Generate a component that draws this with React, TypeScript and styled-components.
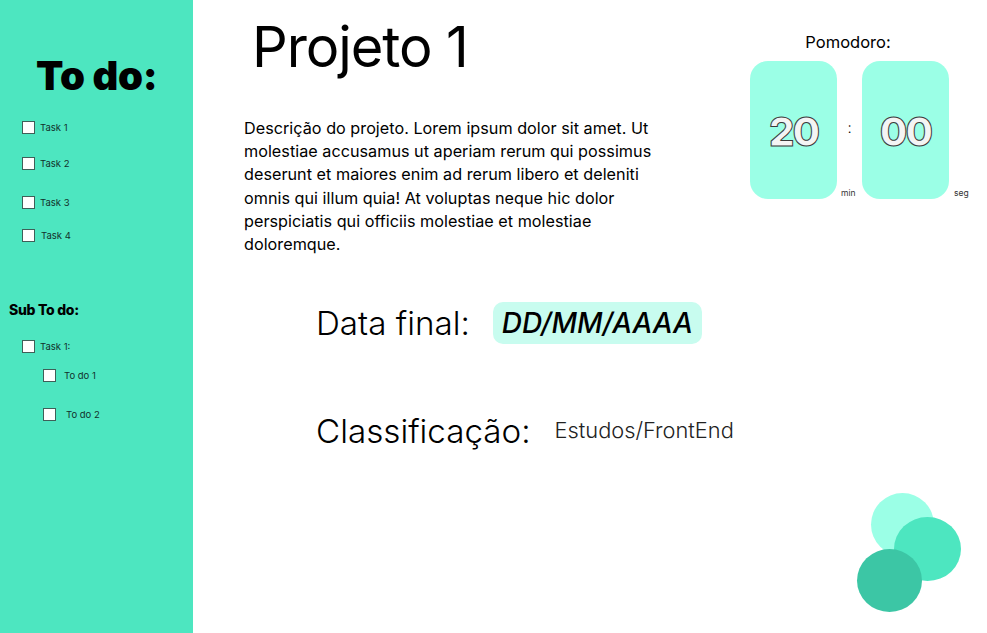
import React from "react";
import styled, { createGlobalStyle } from "styled-components";

const Global = createGlobalStyle`
  html, body { margin: 0; padding: 0; background: #fff; }
  body { font-family: Inter, "Liberation Sans", sans-serif; color: #000; }
`;
const Page = styled.div`
  position: relative;
  display: flex;
  width: 987px;
  height: 633px;
  overflow: hidden;
  background: #fff;
`;
const Sidebar = styled.aside`
  display: flex;
  flex-direction: column;
  width: 193px;
  flex: none;
  background: #4de6c0;
  padding-top: 54px;
  box-sizing: border-box;
`;
const SideTitle = styled.h2`
  margin: 0 0 32px 36px;
  font-size: 40px;
  line-height: 44px;
  font-weight: 900;
  letter-spacing: -0.3px;
  white-space: nowrap;
`;
const TaskRow = styled.label<{ $top: number; $left?: number; $gap?: number }>`
  display: flex;
  align-items: center;
  height: 14px;
  margin-top: ${(p) => p.$top}px;
  margin-left: ${(p) => p.$left ?? 22}px;
  gap: ${(p) => p.$gap ?? 5}px;
  font-size: 9.5px;
  color: #12312b;
  white-space: nowrap;
`;
const Box = styled.span`
  width: 13px;
  height: 13px;
  flex: none;
  box-sizing: border-box;
  background: #fff;
  border: 1px solid #3f5f58;
`;
const SubTitle = styled.h3`
  margin: 58px 0 0 9px;
  font-size: 14px;
  line-height: 20px;
  font-weight: 800;
  letter-spacing: -0.3px;
`;
const Main = styled.main`
  flex: 1;
  display: flex;
  flex-direction: column;
  min-width: 0;
`;
const TopRow = styled.div`
  display: flex;
  justify-content: space-between;
  align-items: flex-start;
`;
const Intro = styled.div`
  display: flex;
  flex-direction: column;
`;
const Title = styled.h1`
  margin: 10px 0 0 59px;
  font-size: 56px;
  line-height: 74px;
  font-weight: 400;
  letter-spacing: -1.1px;
  white-space: nowrap;
`;
const Description = styled.p`
  margin: 33px 0 0 51px;
  width: 430px;
  font-size: 16.2px;
  line-height: 23.2px;
  font-weight: 400;
  letter-spacing: 0.02px;
`;
const Pomodoro = styled.section`
  display: grid;
  grid-template-columns: 87px 25px 87px 19px;
  grid-template-rows: auto 138px;
  margin: 32px 19px 0 0;
  width: 218px;
`;
const PomodoroLabel = styled.div`
  grid-column: 1 / -1;
  text-align: center;
  font-size: 16.5px;
  line-height: 20px;
  margin: 0 22px 9px 0;
`;
const Card = styled.div`
  display: flex;
  flex: 1;
  align-items: center;
  justify-content: center;
  background: #9bffe6;
  border-radius: 18px;
  padding-top: 2px;
  box-sizing: border-box;
  font-size: 40px;
  font-weight: 800;
  color: #f4f4f4;
  -webkit-text-stroke: 1px #3a3a3a;
  letter-spacing: -2px;
`;
const Colon = styled.div`
  display: flex;
  align-items: center;
  justify-content: center;
  padding-bottom: 6px;
  font-size: 15px;
  font-weight: 300;
`;
const CardCell = styled.div`
  display: flex;
  position: relative;
`;
const CardUnit = styled.span<{ $gap: number }>`
  position: absolute;
  left: 100%;
  bottom: 0;
  margin: 0 0 1px ${(p) => p.$gap}px;
  font-size: 8.5px;
  line-height: 10px;
  color: #333;
`;
const Field = styled.div<{ $top: number }>`
  display: flex;
  align-items: center;
  margin: ${(p) => p.$top}px 0 0 123px;
  white-space: nowrap;
`;
const FieldLabel = styled.span`
  font-size: 33.2px;
  line-height: 42px;
  font-weight: 300;
`;
const DateBadge = styled.span`
  display: flex;
  align-items: center;
  justify-content: center;
  margin-left: 23px;
  width: 209px;
  height: 42px;
  border-radius: 10px;
  background: #c8fcef;
  font-size: 28px;
  font-weight: 500;
  font-style: italic;
`;
const FieldValue = styled.span`
  margin-left: 24px;
  font-size: 21.8px;
  font-weight: 300;
  color: #222;
  padding-bottom: 2px;
`;
const Dot = styled.div<{ $x: number; $y: number; $w: number; $h: number; $c: string }>`
  position: absolute;
  left: ${(p) => p.$x}px;
  top: ${(p) => p.$y}px;
  width: ${(p) => p.$w}px;
  height: ${(p) => p.$h}px;
  border-radius: 50%;
  background: ${(p) => p.$c};
`;

const Task = ({ label, top, left, gap }: { label: string; top: number; left?: number; gap?: number }) => (
  <TaskRow $top={top} $left={left} $gap={gap}>
    <Box />
    {label}
  </TaskRow>
);

export default function App() {
  return (
    <Page>
      <Global />
      <Sidebar>
        <SideTitle>To do:</SideTitle>
        <Task label="Task 1" top={-10} />
        <Task label="Task 2" top={22} />
        <Task label="Task 3" top={25} />
        <Task label="Task 4" top={19} gap={6} />
        <SubTitle>Sub To do:</SubTitle>
        <Task label="Task 1:" top={19} />
        <Task label="To do 1" top={15} left={43} gap={8} />
        <Task label="To do 2" top={25} left={43} gap={10} />
      </Sidebar>
      <Main>
        <TopRow>
          <Intro>
            <Title>Projeto 1</Title>
            <Description>
              Descrição do projeto. Lorem ipsum dolor sit amet. Ut molestiae accusamus ut aperiam rerum qui possimus
              deserunt et maiores enim ad rerum libero et deleniti omnis qui illum quia! At voluptas neque hic dolor
              perspiciatis qui officiis molestiae et molestiae doloremque.
            </Description>
          </Intro>
          <Pomodoro>
            <PomodoroLabel>Pomodoro:</PomodoroLabel>
            <CardCell>
              <Card>20</Card>
              <CardUnit $gap={4}>min</CardUnit>
            </CardCell>
            <Colon>:</Colon>
            <CardCell>
              <Card>00</Card>
              <CardUnit $gap={5}>seg</CardUnit>
            </CardCell>
          </Pomodoro>
        </TopRow>
        <Field $top={46}>
          <FieldLabel>Data final:</FieldLabel>
          <DateBadge>DD/MM/AAAA</DateBadge>
        </Field>
        <Field $top={66}>
          <FieldLabel>Classificação:</FieldLabel>
          <FieldValue>Estudos/FrontEnd</FieldValue>
        </Field>
      </Main>
      <Dot $x={871} $y={493} $w={63} $h={63} $c="#9bffe6" />
      <Dot $x={894} $y={517} $w={67} $h={64} $c="#4de6c0" />
      <Dot $x={857} $y={549} $w={65} $h={63} $c="#3cc6a5" />
    </Page>
  );
}
